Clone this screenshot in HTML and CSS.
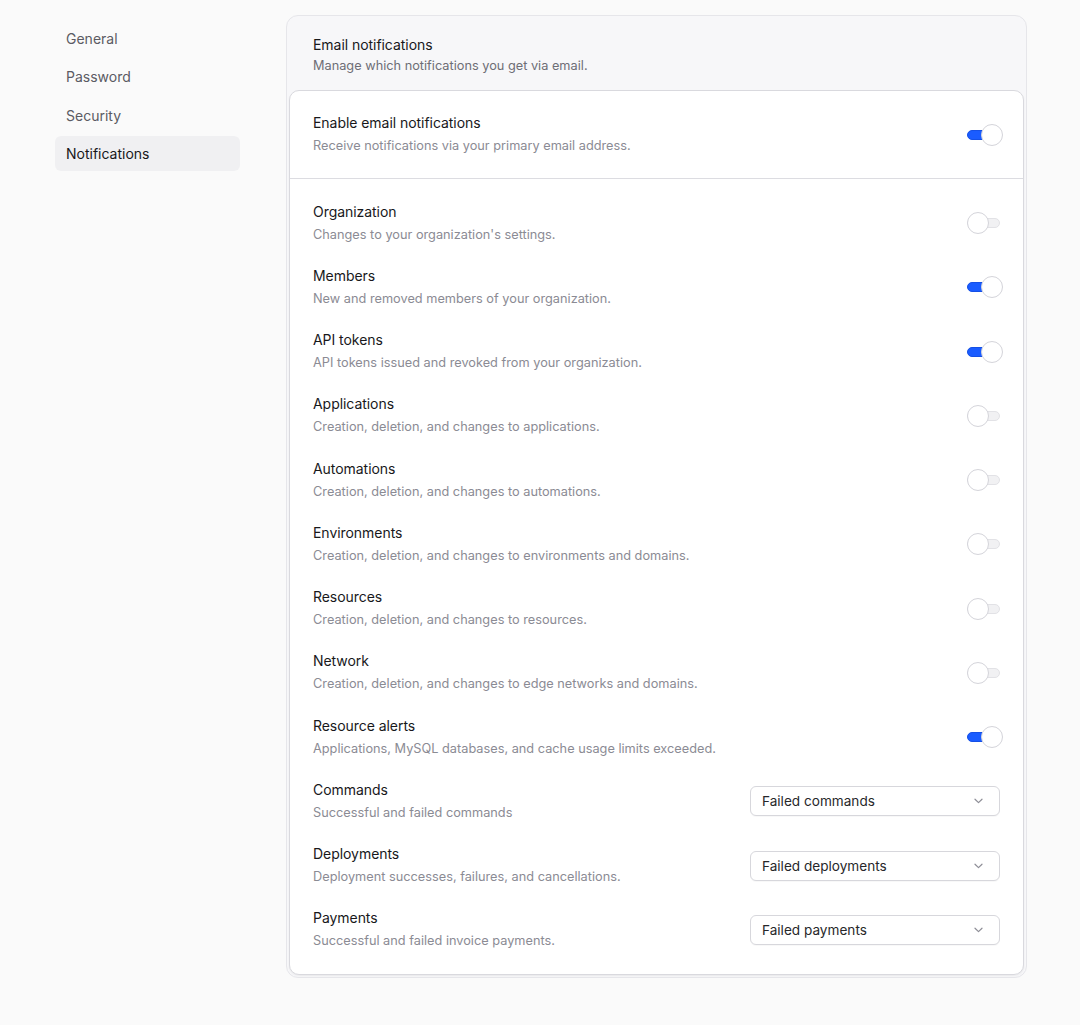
FILE: index.html
```html
<!DOCTYPE html>
<html lang="en">
<head>
<meta charset="utf-8">
<title>Notifications</title>
<link rel="stylesheet" href="styles.css">
</head>
<body>
<div class="page">
  <nav class="sidebar">
    <a class="nav-item">General</a>
    <a class="nav-item">Password</a>
    <a class="nav-item">Security</a>
    <a class="nav-item active">Notifications</a>
  </nav>
  <section class="panel">
    <header class="panel-head">
      <div class="title">Email notifications</div>
      <div class="desc head-desc">Manage which notifications you get via email.</div>
    </header>
    <div class="card">
      <div class="master">
        <div class="text">
          <div class="title">Enable email notifications</div>
          <div class="desc">Receive notifications via your primary email address.</div>
        </div>
        <span class="switch on"><span class="knob"></span></span>
      </div>
      <div class="list">
        <div class="row"><div class="text"><div class="title">Organization</div><div class="desc">Changes to your organization's settings.</div></div><span class="switch"><span class="knob"></span></span></div>
        <div class="row"><div class="text"><div class="title">Members</div><div class="desc">New and removed members of your organization.</div></div><span class="switch on"><span class="knob"></span></span></div>
        <div class="row"><div class="text"><div class="title">API tokens</div><div class="desc">API tokens issued and revoked from your organization.</div></div><span class="switch on"><span class="knob"></span></span></div>
        <div class="row"><div class="text"><div class="title">Applications</div><div class="desc">Creation, deletion, and changes to applications.</div></div><span class="switch"><span class="knob"></span></span></div>
        <div class="row"><div class="text"><div class="title">Automations</div><div class="desc">Creation, deletion, and changes to automations.</div></div><span class="switch"><span class="knob"></span></span></div>
        <div class="row"><div class="text"><div class="title">Environments</div><div class="desc">Creation, deletion, and changes to environments and domains.</div></div><span class="switch"><span class="knob"></span></span></div>
        <div class="row"><div class="text"><div class="title">Resources</div><div class="desc">Creation, deletion, and changes to resources.</div></div><span class="switch"><span class="knob"></span></span></div>
        <div class="row"><div class="text"><div class="title">Network</div><div class="desc">Creation, deletion, and changes to edge networks and domains.</div></div><span class="switch"><span class="knob"></span></span></div>
        <div class="row"><div class="text"><div class="title">Resource alerts</div><div class="desc">Applications, MySQL databases, and cache usage limits exceeded.</div></div><span class="switch on"><span class="knob"></span></span></div>
        <div class="row"><div class="text"><div class="title">Commands</div><div class="desc">Successful and failed commands</div></div>
          <div class="select"><span>Failed commands</span><svg class="chev" width="9" height="6" viewBox="0 0 9 6"><path d="M1 1.2 L4.5 4.6 L8 1.2" fill="none" stroke="#8e8e97" stroke-width="1.2" stroke-linecap="round" stroke-linejoin="round"/></svg></div></div>
        <div class="row"><div class="text"><div class="title">Deployments</div><div class="desc">Deployment successes, failures, and cancellations.</div></div>
          <div class="select"><span>Failed deployments</span><svg class="chev" width="9" height="6" viewBox="0 0 9 6"><path d="M1 1.2 L4.5 4.6 L8 1.2" fill="none" stroke="#8e8e97" stroke-width="1.2" stroke-linecap="round" stroke-linejoin="round"/></svg></div></div>
        <div class="row"><div class="text"><div class="title">Payments</div><div class="desc">Successful and failed invoice payments.</div></div>
          <div class="select"><span>Failed payments</span><svg class="chev" width="9" height="6" viewBox="0 0 9 6"><path d="M1 1.2 L4.5 4.6 L8 1.2" fill="none" stroke="#8e8e97" stroke-width="1.2" stroke-linecap="round" stroke-linejoin="round"/></svg></div></div>
      </div>
    </div>
  </section>
</div>
</body>
</html>
```
FILE: styles.css
```css
* { box-sizing: border-box; }
html, body { margin: 0; padding: 0; }
body {
  background: #fafafa;
  font-family: Inter, "Noto Sans", sans-serif;
  font-size: 14px;
  color: #18181b;
  -webkit-font-smoothing: antialiased;
}
.page {
  display: flex;
  align-items: flex-start;
  padding: 15px 0 0 55px;
  gap: 46px;
}
.sidebar {
  width: 185px;
  display: flex;
  flex-direction: column;
  gap: 3.5px;
  padding-top: 5.5px;
}
.nav-item {
  display: block;
  height: 35px;
  line-height: 35px;
  padding: 0 11px;
  border-radius: 6px;
  color: #5b5b63;
  font-size: 14px;
}
.nav-item.active {
  background: #f0f0f2;
  color: #18181b;
}
.panel {
  width: 741px;
  background: #f7f7f9;
  border: 1px solid #e6e6ea;
  border-radius: 12px;
  padding: 0 2px 2px 2px;
}
.panel-head {
  padding: 19px 24px 14px 24px;
}
.title {
  font-size: 14px;
  line-height: 20px;
  color: #18181b;
  letter-spacing: -0.05px;
}
.desc {
  font-size: 12.75px;
  line-height: 20px;
  color: #8b8b94;
  margin-top: 3px;
}
.head-desc { margin-top: 1px; color: #6e6e76; }
.card {
  background: #ffffff;
  border: 1px solid #d9d9de;
  border-radius: 10px;
  box-shadow: 0 1px 2px rgba(0,0,0,0.06);
}
.master, .row {
  display: flex;
  align-items: center;
  justify-content: space-between;
  padding: 22px 23px;
}
.master { border-bottom: 1px solid #dcdce1; }
.list { padding: 12px 0 11.5px; }
.row { padding: 10.625px 23px; }
.switch {
  position: relative;
  display: block;
  width: 33px;
  height: 10px;
  border-radius: 5px;
  background: #f1f1f3;
  border: 1px solid #e2e2e6;
  flex: none;
}
.switch .knob {
  position: absolute;
  top: -7px;
  left: -1px;
  width: 22px;
  height: 22px;
  border-radius: 50%;
  background: #fff;
  border: 1px solid #d4d4da;
}
.switch.on {
  background: #1a5cff;
  border-color: #1550e6;
}
.switch.on .knob { left: auto; right: -4px; }
.select {
  width: 250px;
  height: 30px;
  border: 1px solid #d7d7dc;
  border-radius: 6px;
  background: #fff;
  display: flex;
  align-items: center;
  justify-content: space-between;
  padding: 0 16px 0 11px;
  font-size: 13.6px;
  color: #27272a;
  box-shadow: 0 1px 1px rgba(0,0,0,0.03);
}
.chev { display: block; }
```
